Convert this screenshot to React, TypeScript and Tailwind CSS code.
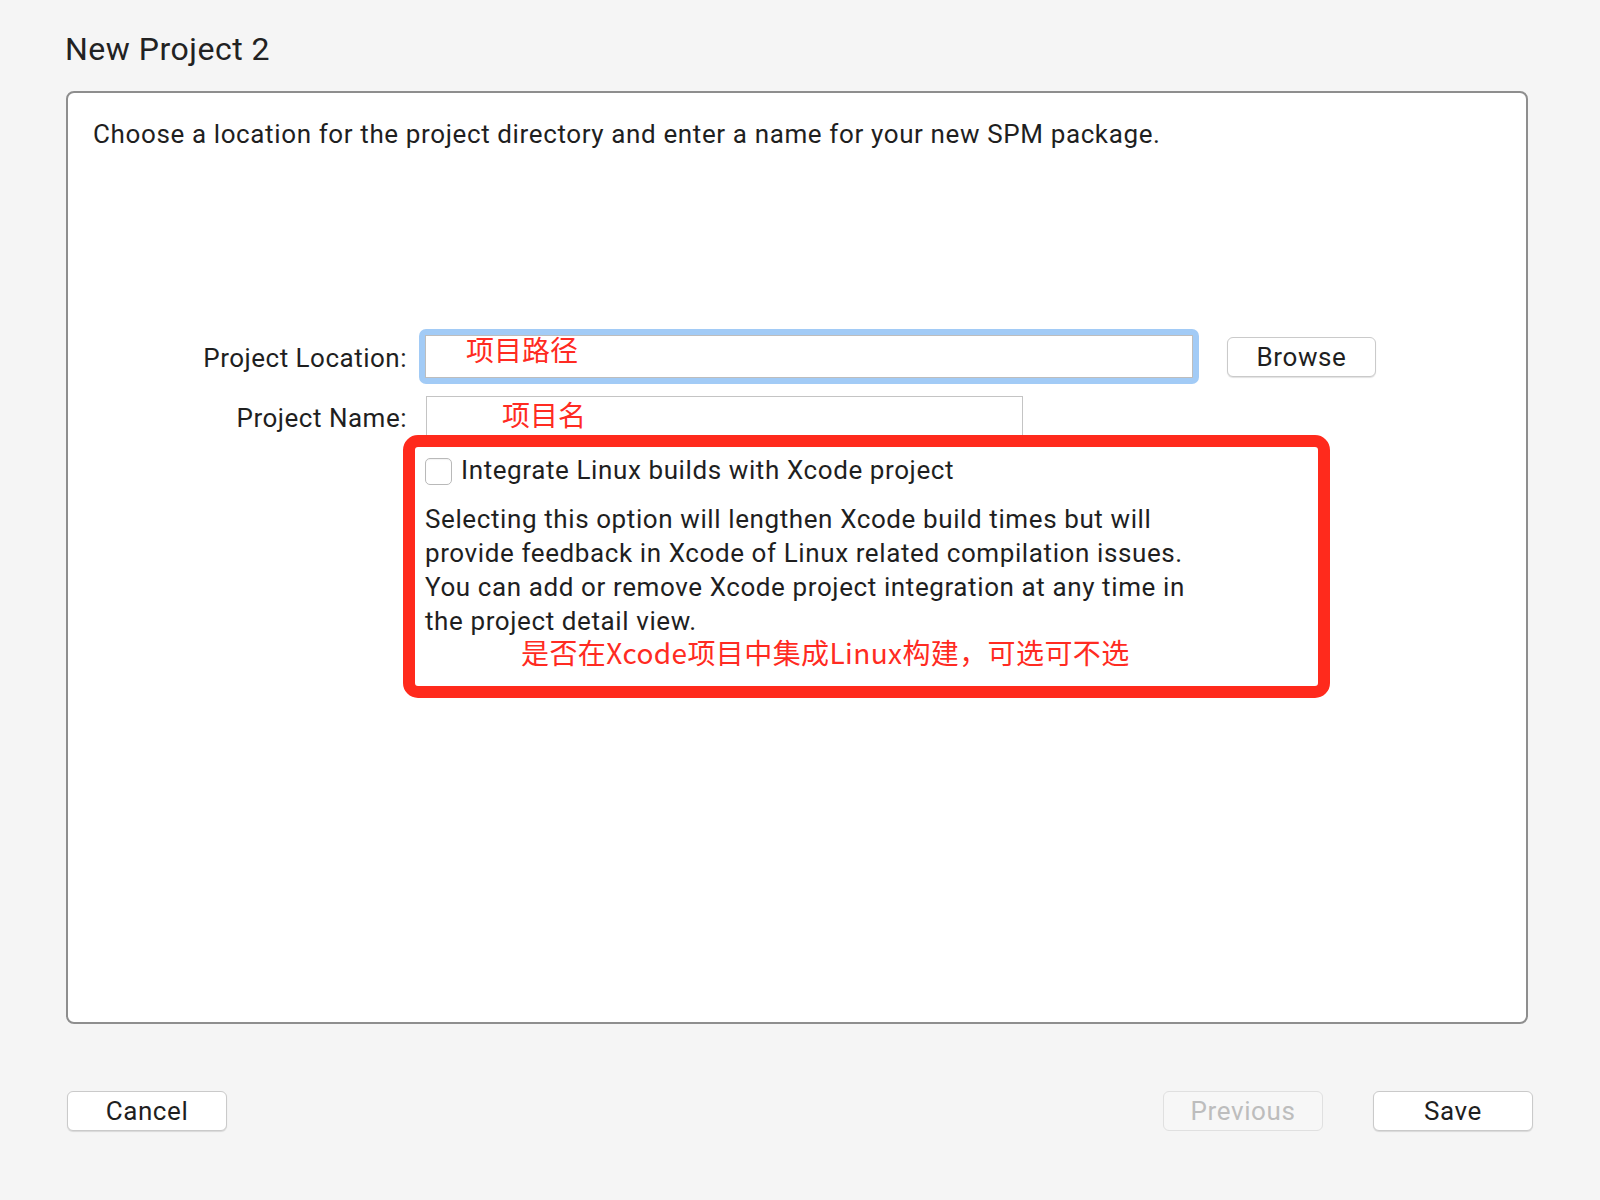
import React from "react";

const FONT = { fontFamily: 'Roboto, "Noto Sans CJK SC", sans-serif' };
const CJK = { fontFamily: '"Noto Sans CJK SC", "Noto Sans", sans-serif' };

function MacButton({ label, disabled, wide }: { label: string; disabled?: boolean; wide?: boolean }) {
  return (
    <div
      className={
        "flex items-center justify-center h-[40px] rounded-[6px] border text-[26px] leading-none tracking-[0.6px] " +
        (wide ? "w-[160px] " : "w-[149px] ") +
        (disabled
          ? "bg-[#f7f7f7] border-[#e0e0e0] text-[#bdbdbd]"
          : "bg-white border-[#cacaca] text-[#1f1f1f] shadow-[0_1px_1px_rgba(0,0,0,0.12)]")
      }
    >
      {label}
    </div>
  );
}

export default function App() {
  return (
    <div className="w-[1600px] h-[1200px] bg-[#f5f5f5] text-[#1f1f1f] flex flex-col" style={FONT}>
      <div className="pl-[65px] pt-[29px] text-[32px] leading-[40px] tracking-[0.5px] text-[#222]">New Project 2</div>

      <div className="ml-[66px] mt-[22px] w-[1462px] h-[933px] border-2 border-[#8e8e8e] rounded-[8px] bg-white pt-[24px] flex flex-col">
        <div className="pl-[25px] text-[26px] leading-[34px] tracking-[0.62px]">
          Choose a location for the project directory and enter a name for your new SPM package.
        </div>

        <div className="mt-[178px] flex flex-col">
          {/* Project Location row */}
          <div className="flex items-center">
            <div className="w-[339px] text-right text-[26px] leading-[34px] pt-[2px] tracking-[0.5px]">Project Location:</div>
            <div className="ml-[12px] p-[6px] rounded-[7px] bg-[#a2cbf6]">
              <div className="w-[768px] h-[43px] bg-white border border-[#bdbdbd] pl-[40px] flex items-start">
                <span className="text-[28px] leading-[30px] text-[#ff2b22] -mt-[2px]" style={CJK}>
                  项目路径
                </span>
              </div>
            </div>
            <div className="ml-[28px]">
              <MacButton label="Browse" />
            </div>
          </div>

          {/* Project Name row */}
          <div className="flex items-center mt-[12px]">
            <div className="w-[339px] text-right text-[26px] leading-[34px] pt-[2px] tracking-[0.5px]">Project Name:</div>
            <div className="ml-[19px] w-[597px] h-[41px] bg-white border border-[#c4c4c4] pl-[75px] flex items-start">
              <span className="text-[28px] leading-[30px] text-[#ff2b22] pt-[2px]" style={CJK}>
                项目名
              </span>
            </div>
          </div>

          {/* Annotated option box */}
          <div className="relative z-10 -mt-[2px] ml-[335px] w-[927px] h-[263px] border-[12px] border-[#ff2a1c] rounded-[15px] bg-white pl-[10px] pt-[9px]">
            <div className="flex items-center">
              <div className="w-[27px] h-[27px] rounded-[5px] border border-[#b9b9b9] bg-white shadow-[inset_0_1px_1px_rgba(0,0,0,0.05)]" />
              <span className="ml-[9px] text-[26px] leading-[34px] tracking-[0.6px] -mt-[3px]">
                Integrate Linux builds with Xcode project
              </span>
            </div>
            <div className="mt-[15px] text-[26px] leading-[34px] tracking-[0.6px]">
              <div>Selecting this option will lengthen Xcode build times but will</div>
              <div>provide feedback in Xcode of Linux related compilation issues.</div>
              <div>You can add or remove Xcode project integration at any time in</div>
              <div>the project detail view.</div>
            </div>
            <div className="ml-[96px] text-[28px] leading-[28px] tracking-[0.4px] text-[#ff2b22]" style={CJK}>
              是否在Xcode项目中集成Linux构建，可选可不选
            </div>
          </div>
        </div>
      </div>

      <div className="mt-[67px] flex items-center">
        <div className="ml-[67px]">
          <MacButton label="Cancel" wide />
        </div>
        <div className="ml-[936px]">
          <MacButton label="Previous" disabled wide />
        </div>
        <div className="ml-[50px]">
          <MacButton label="Save" wide />
        </div>
      </div>
    </div>
  );
}
